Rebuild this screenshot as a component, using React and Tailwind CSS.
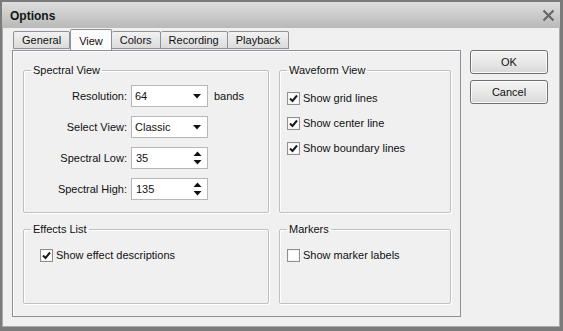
import React from "react";

const Check = ({ checked }) => (
  <span className="w-[13px] h-[13px] border border-[#8f8f8f] bg-white flex items-center justify-center shadow-[inset_0_0_0_1px_#f4f4f4]">
    {checked && (
      <svg width="9" height="9" viewBox="0 0 9 9">
        <path d="M1 4.5 L3.5 7 L8 1.5" stroke="#1a1a1a" strokeWidth="2" fill="none" />
      </svg>
    )}
  </span>
);

const CheckRow = ({ checked, label }) => (
  <div className="flex items-center gap-[3px] h-[13px]">
    <Check checked={checked} />
    <span>{label}</span>
  </div>
);

const Group = ({ title, className, children }) => (
  <fieldset className="border border-[#c0c0c0] shadow-[inset_1px_1px_0_#ffffff,1px_1px_0_#ffffff] rounded-[2px] px-0">
    <legend className="ml-[7px] px-[2px] leading-[14px] text-[11px]">{title}</legend>
    <div className={className}>{children}</div>
  </fieldset>
);

const Combo = ({ value }) => (
  <div className="w-[77px] h-[22px] bg-white border border-[#b5b7bd] flex items-center justify-between pl-[3px] pr-[6px]">
    <span>{value}</span>
    <svg width="8" height="5" viewBox="0 0 8 5"><path d="M0 0 H8 L4 4.5 Z" fill="#111" /></svg>
  </div>
);

const Spin = ({ value }) => (
  <div className="w-[77px] h-[22px] bg-white border border-[#b5b7bd] flex items-center justify-between pl-[4px] pr-[5px]">
    <span>{value}</span>
    <svg width="9" height="14" viewBox="0 0 9 14">
      <path d="M0.5 5 H8.5 L4.5 0.5 Z" fill="#111" />
      <path d="M0.5 9 H8.5 L4.5 13.5 Z" fill="#111" />
    </svg>
  </div>
);

const Row = ({ label, children }) => (
  <div className="flex items-center h-[22px]">
    <span className="w-[107px] text-right pr-[4px]">{label}</span>
    {children}
  </div>
);

const Tab = ({ label, active }) =>
  active ? (
    <div className="h-[21px] -mb-[1px] px-[8px] bg-[#fbfbfb] border border-b-0 border-[#8e9198] rounded-t-[2px] flex items-start pt-[3px] relative z-10">
      {label}
    </div>
  ) : (
    <div className="h-[18px] mt-[2px] px-[8px] bg-gradient-to-b from-[#f2f2f2] to-[#dbdbdb] border border-[#8e9198] border-l-0 first:border-l rounded-t-[2px] flex items-center">
      {label}
    </div>
  );

const Button = ({ label }) => (
  <div className="w-[78px] h-[24px] rounded-[3px] border border-[#707070] bg-gradient-to-b from-[#f3f3f3] via-[#e8e8e8] to-[#d8d8d8] shadow-[inset_0_0_0_1px_#fbfbfb] flex items-center justify-center">
    {label}
  </div>
);

export default function App() {
  return (
    <div className="w-[563px] h-[331px] bg-white font-['Liberation_Sans',Arial,sans-serif] text-[11px] text-[#111]">
      <div className="w-[563px] h-[331px] border-2 border-[#7b7b7b] border-b-[4px] border-r-[3px] shadow-[inset_0_0_0_1px_#aaaaaa] bg-[#f0f0f0] flex flex-col">
        <div className="h-[26px] bg-gradient-to-b from-[#dedede] to-[#b9b9b9] flex items-center justify-between pl-[8px] pr-[5px] shrink-0">
          <span className="font-bold text-[12px] text-[#151515] mt-[1px]">Options</span>
          <svg width="13" height="13" viewBox="0 0 13 13" className="mt-[1px]">
            <path d="M1.5 1.5 L11.5 11.5 M11.5 1.5 L1.5 11.5" stroke="#666" strokeWidth="2.2" />
          </svg>
        </div>
        <div className="flex flex-1 pl-[10px] pt-[1px] gap-[9px]">
          <div className="flex flex-col w-[449px] pb-[10px]">
            <div className="flex h-[21px] pl-[1px] items-start">
              <Tab label="General" />
              <Tab label="View" active />
              <Tab label="Colors" />
              <Tab label="Recording" />
              <Tab label="Playback" />
            </div>
            <div className="flex-1 border border-[#8e9198] bg-[#f0f0f0] shadow-[inset_1px_1px_0_#ffffff] pl-[10px] pr-[9px] pt-[12px] grid grid-cols-[246px_172px] grid-rows-[150px_82px] gap-x-[10px] gap-y-[9px]">
              <Group title="Spectral View" className="pt-[8px]">
                <div className="flex flex-col gap-[9px]">
                  <Row label="Resolution:">
                    <Combo value="64" />
                    <span className="ml-[6px]">bands</span>
                  </Row>
                  <Row label="Select View:">
                    <Combo value="Classic" />
                  </Row>
                  <Row label="Spectral Low:">
                    <Spin value="35" />
                  </Row>
                  <Row label="Spectral High:">
                    <Spin value="135" />
                  </Row>
                </div>
              </Group>
              <Group title="Waveform View" className="pt-[15px] pl-[7px]">
                <div className="flex flex-col gap-[12px]">
                  <CheckRow checked label="Show grid lines" />
                  <CheckRow checked label="Show center line" />
                  <CheckRow checked label="Show boundary lines" />
                </div>
              </Group>
              <Group title="Effects List" className="pt-[13px] pl-[16px]">
                <CheckRow checked label="Show effect descriptions" />
              </Group>
              <Group title="Markers" className="pt-[13px] pl-[7px]">
                <CheckRow label="Show marker labels" />
              </Group>
            </div>
          </div>
          <div className="flex flex-col gap-[6px] pt-[21px]">
            <Button label="OK" />
            <Button label="Cancel" />
          </div>
        </div>
      </div>
    </div>
  );
}
